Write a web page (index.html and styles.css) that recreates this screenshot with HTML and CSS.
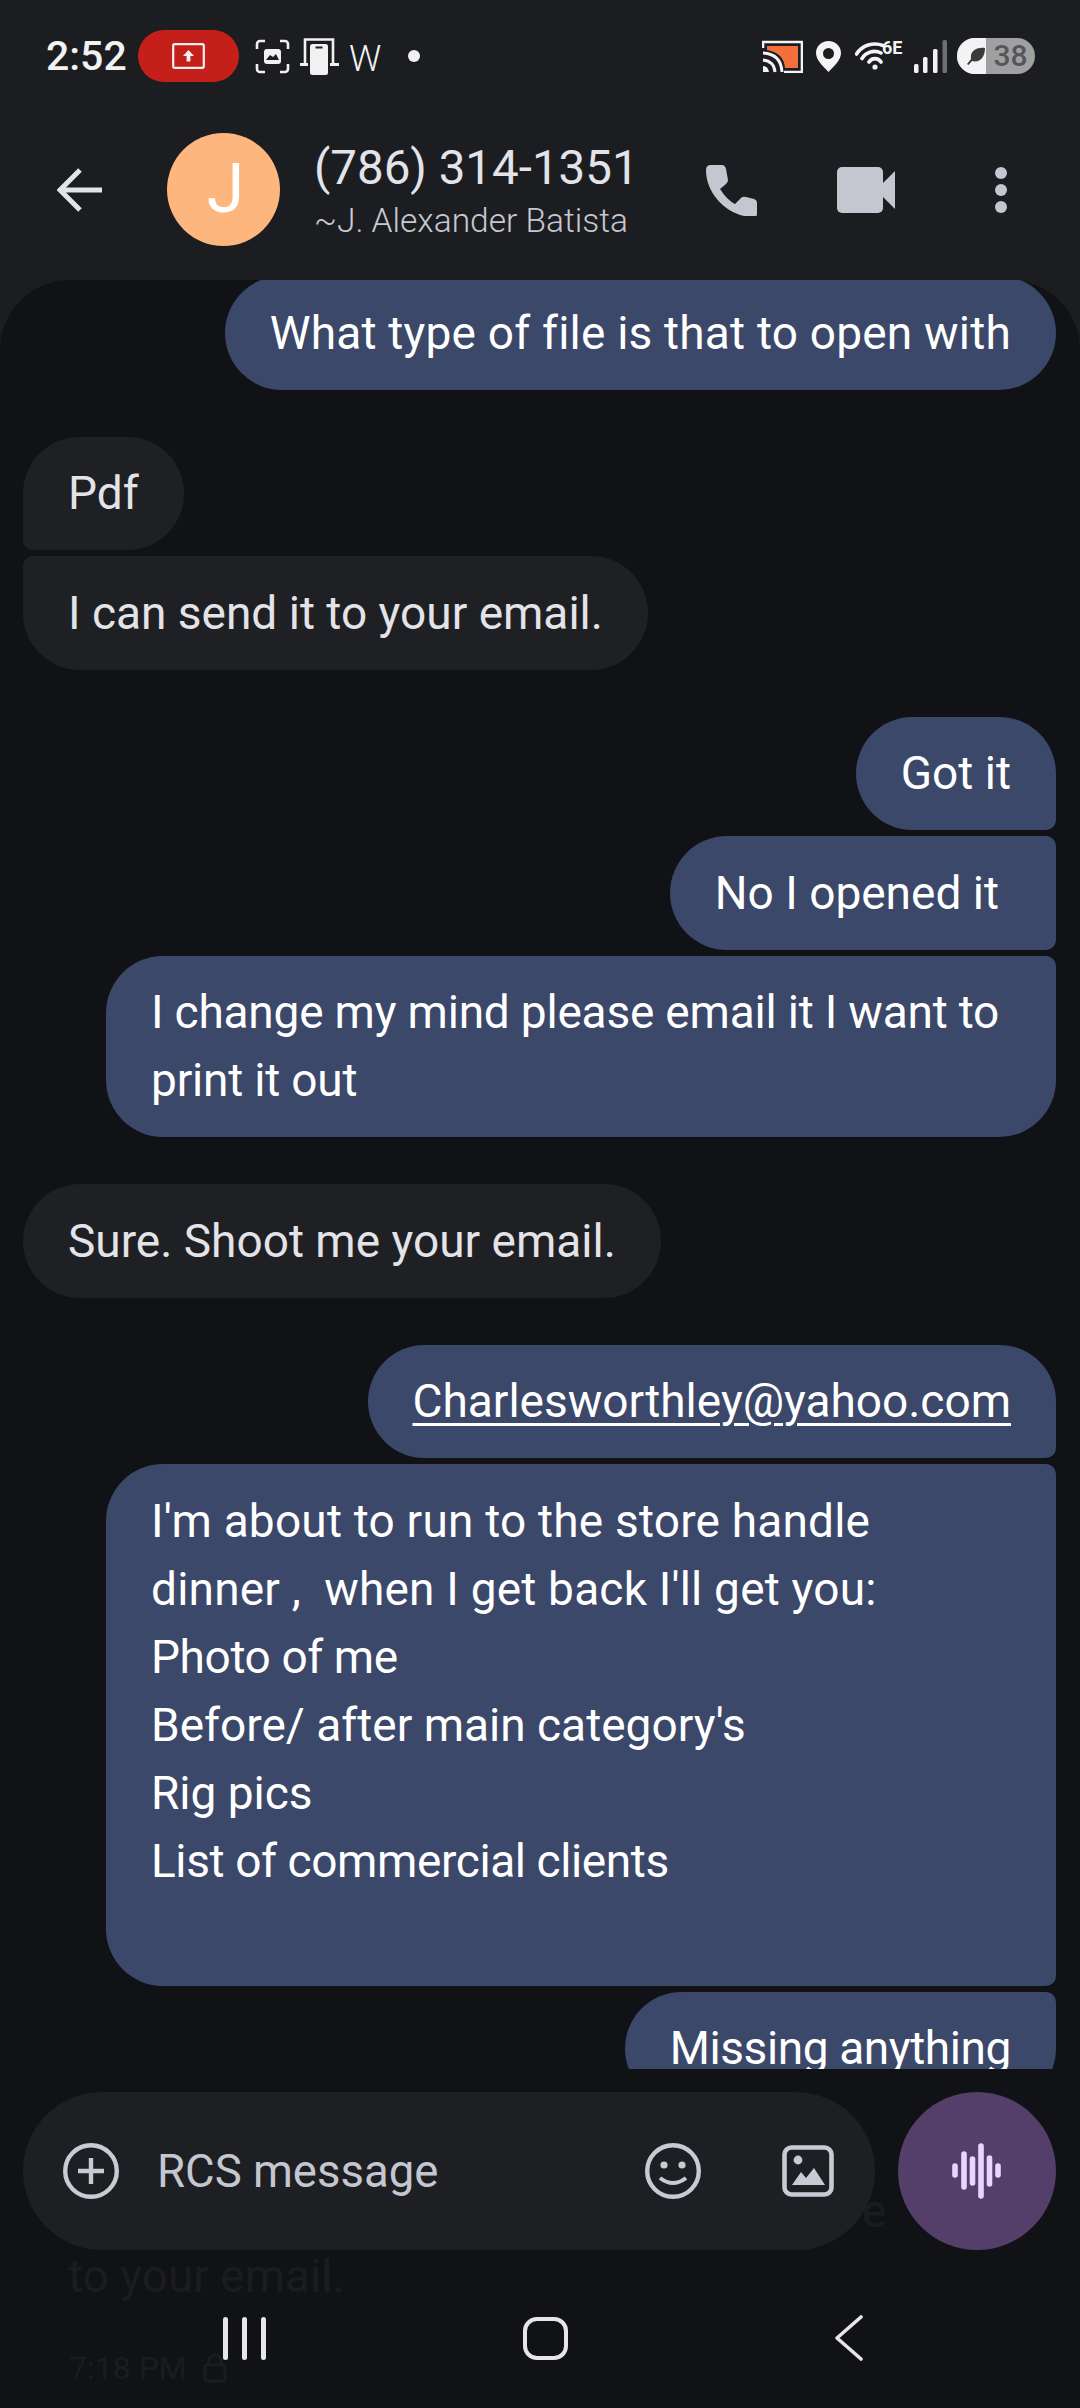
FILE: index.html
```html
<!DOCTYPE html>
<html lang="en">
<head>
<meta charset="utf-8">
<title>Messages</title>
<link rel="stylesheet" href="styles.css">
</head>
<body>
<div class="screen">
  <header class="top">
    <div class="status">
      <span class="clock">2:52</span>
      <span class="rec">
        <svg width="33" height="26" viewBox="0 0 33 26"><rect x="1.2" y="1.2" width="30.6" height="23.6" rx="1.5" fill="none" stroke="#f4f0f0" stroke-width="2.2"/><path d="M16.5 7l5.5 6h-3.6v5.5h-3.800V13H11z" fill="#f4f0f0"/></svg>
      </span>
      <svg class="s-capture" width="35" height="35" viewBox="0 0 35 35"><path d="M2 10V5a3 3 0 0 1 3-3h5M25 2h5a3 3 0 0 1 3 3v5M33 25v5a3 3 0 0 1-3 3h-5M10 33H5a3 3 0 0 1-3-3v-5" fill="none" stroke="#f1f1f1" stroke-width="2.6"/><rect x="9" y="10" width="17" height="15" rx="3" fill="#f1f1f1"/><path d="M11 21l4-5 3 2 3-3 3 6z" fill="#1c1d21"/></svg>
      <svg class="s-link" width="39" height="37" viewBox="0 0 39 37"><path d="M5 26V1.500h28V26" fill="none" stroke="#f1f1f1" stroke-width="2.6"/><rect x="0" y="25" width="11" height="3" fill="#f1f1f1"/><rect x="27" y="25" width="12" height="3" fill="#f1f1f1"/><rect x="8" y="4" width="22" height="33" rx="2.500" fill="#1c1d21"/><rect x="10" y="6" width="18" height="31" rx="2.500" fill="#f1f1f1"/><rect x="15.500" y="8.500" width="7" height="2" fill="#1c1d21"/></svg>
      <span class="s-w">W</span>
      <span class="s-dot"></span>
      <span class="grow"></span>
      <svg class="s-cast" width="41" height="33" viewBox="0 0 41 33"><path d="M1 8V2h39v30H22" fill="none" stroke="#f4f4f4" stroke-width="2.6"/><path d="M5 6h31v22H23Q22 13 5 10z" fill="#f4703a"/><path d="M1 13q18 1 19 19M1 20q11 1 12 12" fill="none" stroke="#f4f4f4" stroke-width="3"/><path d="M1 26q5 0 6 6H1z" fill="#f4f4f4"/></svg>
      <svg class="s-pin" width="25" height="31" viewBox="0 0 25 31"><path fill-rule="evenodd" d="M12.500 0C5.600 0 0 5.300 0 12c0 7.500 8 14 12.500 19C17 26 25 19.500 25 12 25 5.300 19.400 0 12.500 0zm0 7a5.500 5.500 0 1 1 0 11 5.500 5.500 0 0 1 0-11z" fill="#f4f4f4"/></svg>
      <span class="s-wifi">
        <svg width="32" height="31" viewBox="0 0 32 31"><path d="M1.500 15A22 22 0 0 1 28 6.500M7 19.500A14.500 14.500 0 0 1 26 14M14 23A7 7 0 0 1 26 23" fill="none" stroke="#f4f4f4" stroke-width="3.600" stroke-linecap="round"/><circle cx="20" cy="28" r="2.600" fill="#f4f4f4"/></svg>
        <span class="s-6e">6E</span>
      </span>
      <svg class="s-sig" width="33" height="33" viewBox="0 0 33 33"><rect x="0" y="24" width="4.500" height="9" rx="1.500" fill="#f1f1f1"/><rect x="9" y="17" width="4.500" height="16" rx="1.500" fill="#f1f1f1"/><rect x="19" y="9" width="4.500" height="24" rx="1.500" fill="#f1f1f1"/><rect x="28.500" y="0" width="4.500" height="33" rx="1.500" fill="#6e6f72"/></svg>
      <span class="batt">
        <span class="batt-fill"><svg width="20" height="19" viewBox="0 0 20 19"><path d="M19 1C10 0 4 4 5 12L1 17l1.500 1L6 14c8 2 13-4 13-13z" fill="#3a3a3c"/></svg></span>
        <span class="batt-num">38</span>
      </span>
    </div>
    <div class="bar">
      <svg class="back" width="46" height="44" viewBox="0 0 46 44"><path d="M45 22H4M23 2L3 22l20 20" fill="none" stroke="#e3e3ea" stroke-width="5"/></svg>
      <div class="avatar">J</div>
      <div class="who">
        <div class="who-num">(786) 314-1351</div>
        <div class="who-name">~J. Alexander Batista</div>
      </div>
      <svg class="act-call" width="52" height="52" viewBox="0 0 52 52"><path d="M1 6q0-5 5-5h11q3 0 4 4l2 11q0 2-2 4l-6 5q7 11 15 15l6-6q2-2 5-1l8 2q3 1 3 4v11q0 3-4 3C24 53 1 31 1 6z" fill="#c4c6d0"/></svg>
      <svg class="act-video" width="58" height="46" viewBox="0 0 58 46"><rect width="46" height="46" rx="5" fill="#c4c6d0"/><path d="M45 17l13-13v38L45 29z" fill="#c4c6d0"/></svg>
      <div class="act-more"><i></i><i></i><i></i></div>
    </div>
  </header>

  <div class="lower">
    <main class="thread">
      <div class="msg out lead loose">What type of file is that to open with</div>

      <div class="msg in first gap">Pdf</div>
      <div class="msg in last">I can send it to your email.</div>

      <div class="msg out first gap">Got it</div>
      <div class="msg out mid trail">No I opened it</div>
      <div class="msg out last wide tight">I change my mind please email it I want to print it out</div>

      <div class="msg in gap">Sure. Shoot me your email.</div>

      <div class="msg out first gap"><u class="link">Charlesworthley@yahoo.com</u></div>
      <div class="msg out mid wide"><span class="loose">I'm about to run to the store handle<br>dinner ,&nbsp; when I get back I'll get you:</span><br><span class="tighter">Photo of me</span><br>Before/ after main category's<br>Rig pics<br><span class="tighter">List of commercial clients</span><br>&nbsp;</div>
      <div class="msg out last tighter">Missing anything</div>
    </main>

    <div class="under" aria-hidden="true">
      <span class="under-e">e</span>
      <span class="under-line">to your email.</span>
      <span class="under-time">7:18 PM
        <svg width="24" height="30" viewBox="0 0 24 30"><rect x="2" y="12" width="20" height="16" rx="2" fill="none" stroke="#1b1c20" stroke-width="3"/><path d="M6 12V8a6 6 0 0 1 12 0v4" fill="none" stroke="#1b1c20" stroke-width="3"/></svg>
      </span>
    </div>

    <div class="compose">
      <div class="field">
        <svg class="c-plus" width="56" height="56" viewBox="0 0 56 56"><circle cx="28" cy="28" r="25.800" fill="none" stroke="#c9cad3" stroke-width="4.400"/><path d="M28 15v26M15 28h26" stroke="#c9cad3" stroke-width="4.400"/></svg>
        <span class="c-hint">RCS message</span>
        <svg class="c-emoji" width="56" height="56" viewBox="0 0 56 56"><circle cx="28" cy="28" r="25.800" fill="none" stroke="#c9cad3" stroke-width="4.400"/><circle cx="19" cy="22" r="3.600" fill="#c9cad3"/><circle cx="37" cy="22" r="3.600" fill="#c9cad3"/><path d="M15 35q13 10 26 0" fill="none" stroke="#c9cad3" stroke-width="4"/></svg>
        <svg class="c-image" width="52" height="52" viewBox="0 0 52 52"><rect x="2.500" y="2.500" width="47" height="47" rx="7" fill="none" stroke="#c9cad3" stroke-width="4.600"/><circle cx="16" cy="15" r="4.400" fill="#c9cad3"/><path d="M10 40l9-13 5 6 8-10 11 17z" fill="#c9cad3"/></svg>
      </div>
      <div class="send">
        <svg width="50" height="56" viewBox="0 0 50 56"><g fill="none" stroke="#ead4ff" stroke-width="5.600" stroke-linecap="round"><path d="M3 23v9M12 11v33M20.500 16v24M29 3v50M37.500 15v26M46 23v9"/></g></svg>
      </div>
    </div>

    <nav class="nav">
      <div class="n-recent"><i></i><i></i><i></i></div>
      <div class="n-home"></div>
      <svg class="n-back" width="30" height="46" viewBox="0 0 30 46"><path d="M27 2L3 23l24 21" fill="none" stroke="#e6e6ea" stroke-width="3.600" stroke-linecap="round" stroke-linejoin="round"/></svg>
    </nav>
  </div>
</div>
</body>
</html>
```
FILE: styles.css
```css
* { box-sizing: border-box; }
html, body { margin: 0; padding: 0; background: #1c1d21; }
body { font-family: Roboto, "Noto Sans", sans-serif; }
.screen { position: relative; width: 1080px; height: 2408px; overflow: hidden; display: flex; flex-direction: column; background: #1c1d21; }

/* Top chrome */
.top { height: 280px; flex: none; }
.status { height: 112px; display: flex; align-items: center; padding: 0 45px 0 46px; }
.clock { font-size: 41px; font-weight: 500; color: #f2f2f2; width: 92px; }
.rec { width: 101px; height: 52px; border-radius: 26px; background: #c51f1a; display: flex; align-items: center; justify-content: center; }
.s-capture { margin-left: 16px; }
.s-link { margin-left: 10px; }
.s-w { margin-left: 10px; width: 34px; font-size: 36px; line-height: 36px; font-weight: 300; color: #f1f1f1; margin-top: 6px; }
.s-dot { margin-left: 25px; width: 12px; height: 12px; border-radius: 50%; background: #f1f1f1; }
.grow { flex: 1; }
.s-pin { margin-left: 13px; }
.s-wifi { margin-left: 14px; width: 49px; height: 31px; display: flex; position: relative; margin-top: -4px; }
.s-6e { position: absolute; left: 27px; top: 0; font-size: 18px; line-height: 18px; font-weight: 700; color: #f4f4f4; }
.s-sig { margin-left: 10px; }
.batt { margin-left: 10px; width: 78px; height: 36px; border-radius: 18px; overflow: hidden; display: flex; background: #a0a0a2; }
.batt-fill { width: 29px; background: #f3f3f3; display: flex; align-items: center; justify-content: flex-end; }
.batt-num { flex: 1; text-align: center; font-size: 30px; line-height: 36px; font-weight: 500; color: #56565a; }

.bar { height: 168px; display: flex; align-items: flex-start; padding-top: 21px; position: relative; }
.back { margin: 35px 0 0 57px; flex: none; }
.avatar { margin-left: 64px; width: 113px; height: 113px; border-radius: 50%; background: #fdb67d; color: #fff; font-size: 68px; line-height: 113px; text-align: center; flex: none; padding-left: 4px; }
.who { margin-left: 34px; width: 327px; flex: none; padding-top: 5px; }
.who-num { font-size: 47.500px; line-height: 60px; color: #e3e3ea; white-space: nowrap; }
.who-name { font-size: 33.500px; line-height: 46px; color: #c7c8d0; white-space: nowrap; font-weight: 300; }
.act-call { margin: 31px 0 0 64px; flex: none; }
.act-video { margin: 34px 0 0 80px; flex: none; }
.act-more { margin: 34px 0 0 100px; display: flex; flex-direction: column; gap: 5px; }
.act-more i { width: 12px; height: 12px; border-radius: 50%; background: #c4c6d0; display: block; }

/* Dark panel below the header */
.lower { position: relative; flex: 1; background: #111216; border-radius: 70px 70px 0 0; }

/* Conversation */
.thread { height: 1789px; overflow: hidden; display: flex; flex-direction: column; align-items: flex-start; padding: 0 24px 0 23px; position: relative; z-index: 1; }
.msg { font-size: 46px; line-height: 68px; padding: 22.750px 45px; border-radius: 57px; max-width: 950px; flex: none; }
.in { background: #1f2024; color: #e3e3e8; align-self: flex-start; }
.out { background: #3b4869; color: #fff; align-self: flex-end; }
.lead { margin-top: -4px; }
.gap { margin-top: 47px; }
.wide { width: 950px; }
.trail { padding-right: 57px; }
.loose { letter-spacing: 0.2px; }
.tight { letter-spacing: -0.2px; }
.tighter { letter-spacing: -0.4px; }
.in.first { border-bottom-left-radius: 10px; margin-bottom: 6px; }
.in.last { border-top-left-radius: 10px; }
.out.first { border-bottom-right-radius: 10px; margin-bottom: 6px; }
.out.mid { border-top-right-radius: 10px; border-bottom-right-radius: 10px; margin-bottom: 6px; }
.out.last { border-top-right-radius: 10px; }
.link { text-underline-offset: 6px; text-decoration-thickness: 3px; }

/* Message that shows through the translucent footer */
.under { position: absolute; left: 0; top: 1789px; width: 1080px; height: 339px; color: #1b1c20; font-size: 46px; }
.under span { position: absolute; white-space: nowrap; }
.under-e { left: 862px; top: 115px; }
.under-line { left: 68px; top: 180px; }
.under-time { left: 69px; top: 280px; font-size: 32px; display: flex; align-items: center; gap: 16px; }

/* Composer */
.compose { position: relative; margin-top: 23px; height: 158px; padding: 0 24px 0 23px; display: flex; gap: 23px; }
.field { width: 853px; height: 158px; border-radius: 79px; background: #1e1f23; display: flex; align-items: center; }
.c-plus { margin-left: 40px; flex: none; }
.c-hint { margin-left: 38px; width: 488px; font-size: 45.500px; color: #c4c6d0; flex: none; }
.c-emoji { flex: none; }
.c-image { margin-left: 81px; flex: none; }
.send { width: 158px; height: 158px; border-radius: 50%; background: #533f69; display: flex; align-items: center; justify-content: center; }

/* Navigation keys */
.nav { position: relative; height: 44px; margin-top: 67px; }
.n-recent { position: absolute; left: 223px; top: 0; display: flex; gap: 14px; }
.n-recent i { display: block; width: 5px; height: 43px; border-radius: 2.500px; background: #e6e6ea; }
.n-home { position: absolute; left: 523px; top: 0; width: 45px; height: 43px; border: 4px solid #e6e6ea; border-radius: 14px; }
.n-back { position: absolute; left: 834px; top: -2px; }
```
